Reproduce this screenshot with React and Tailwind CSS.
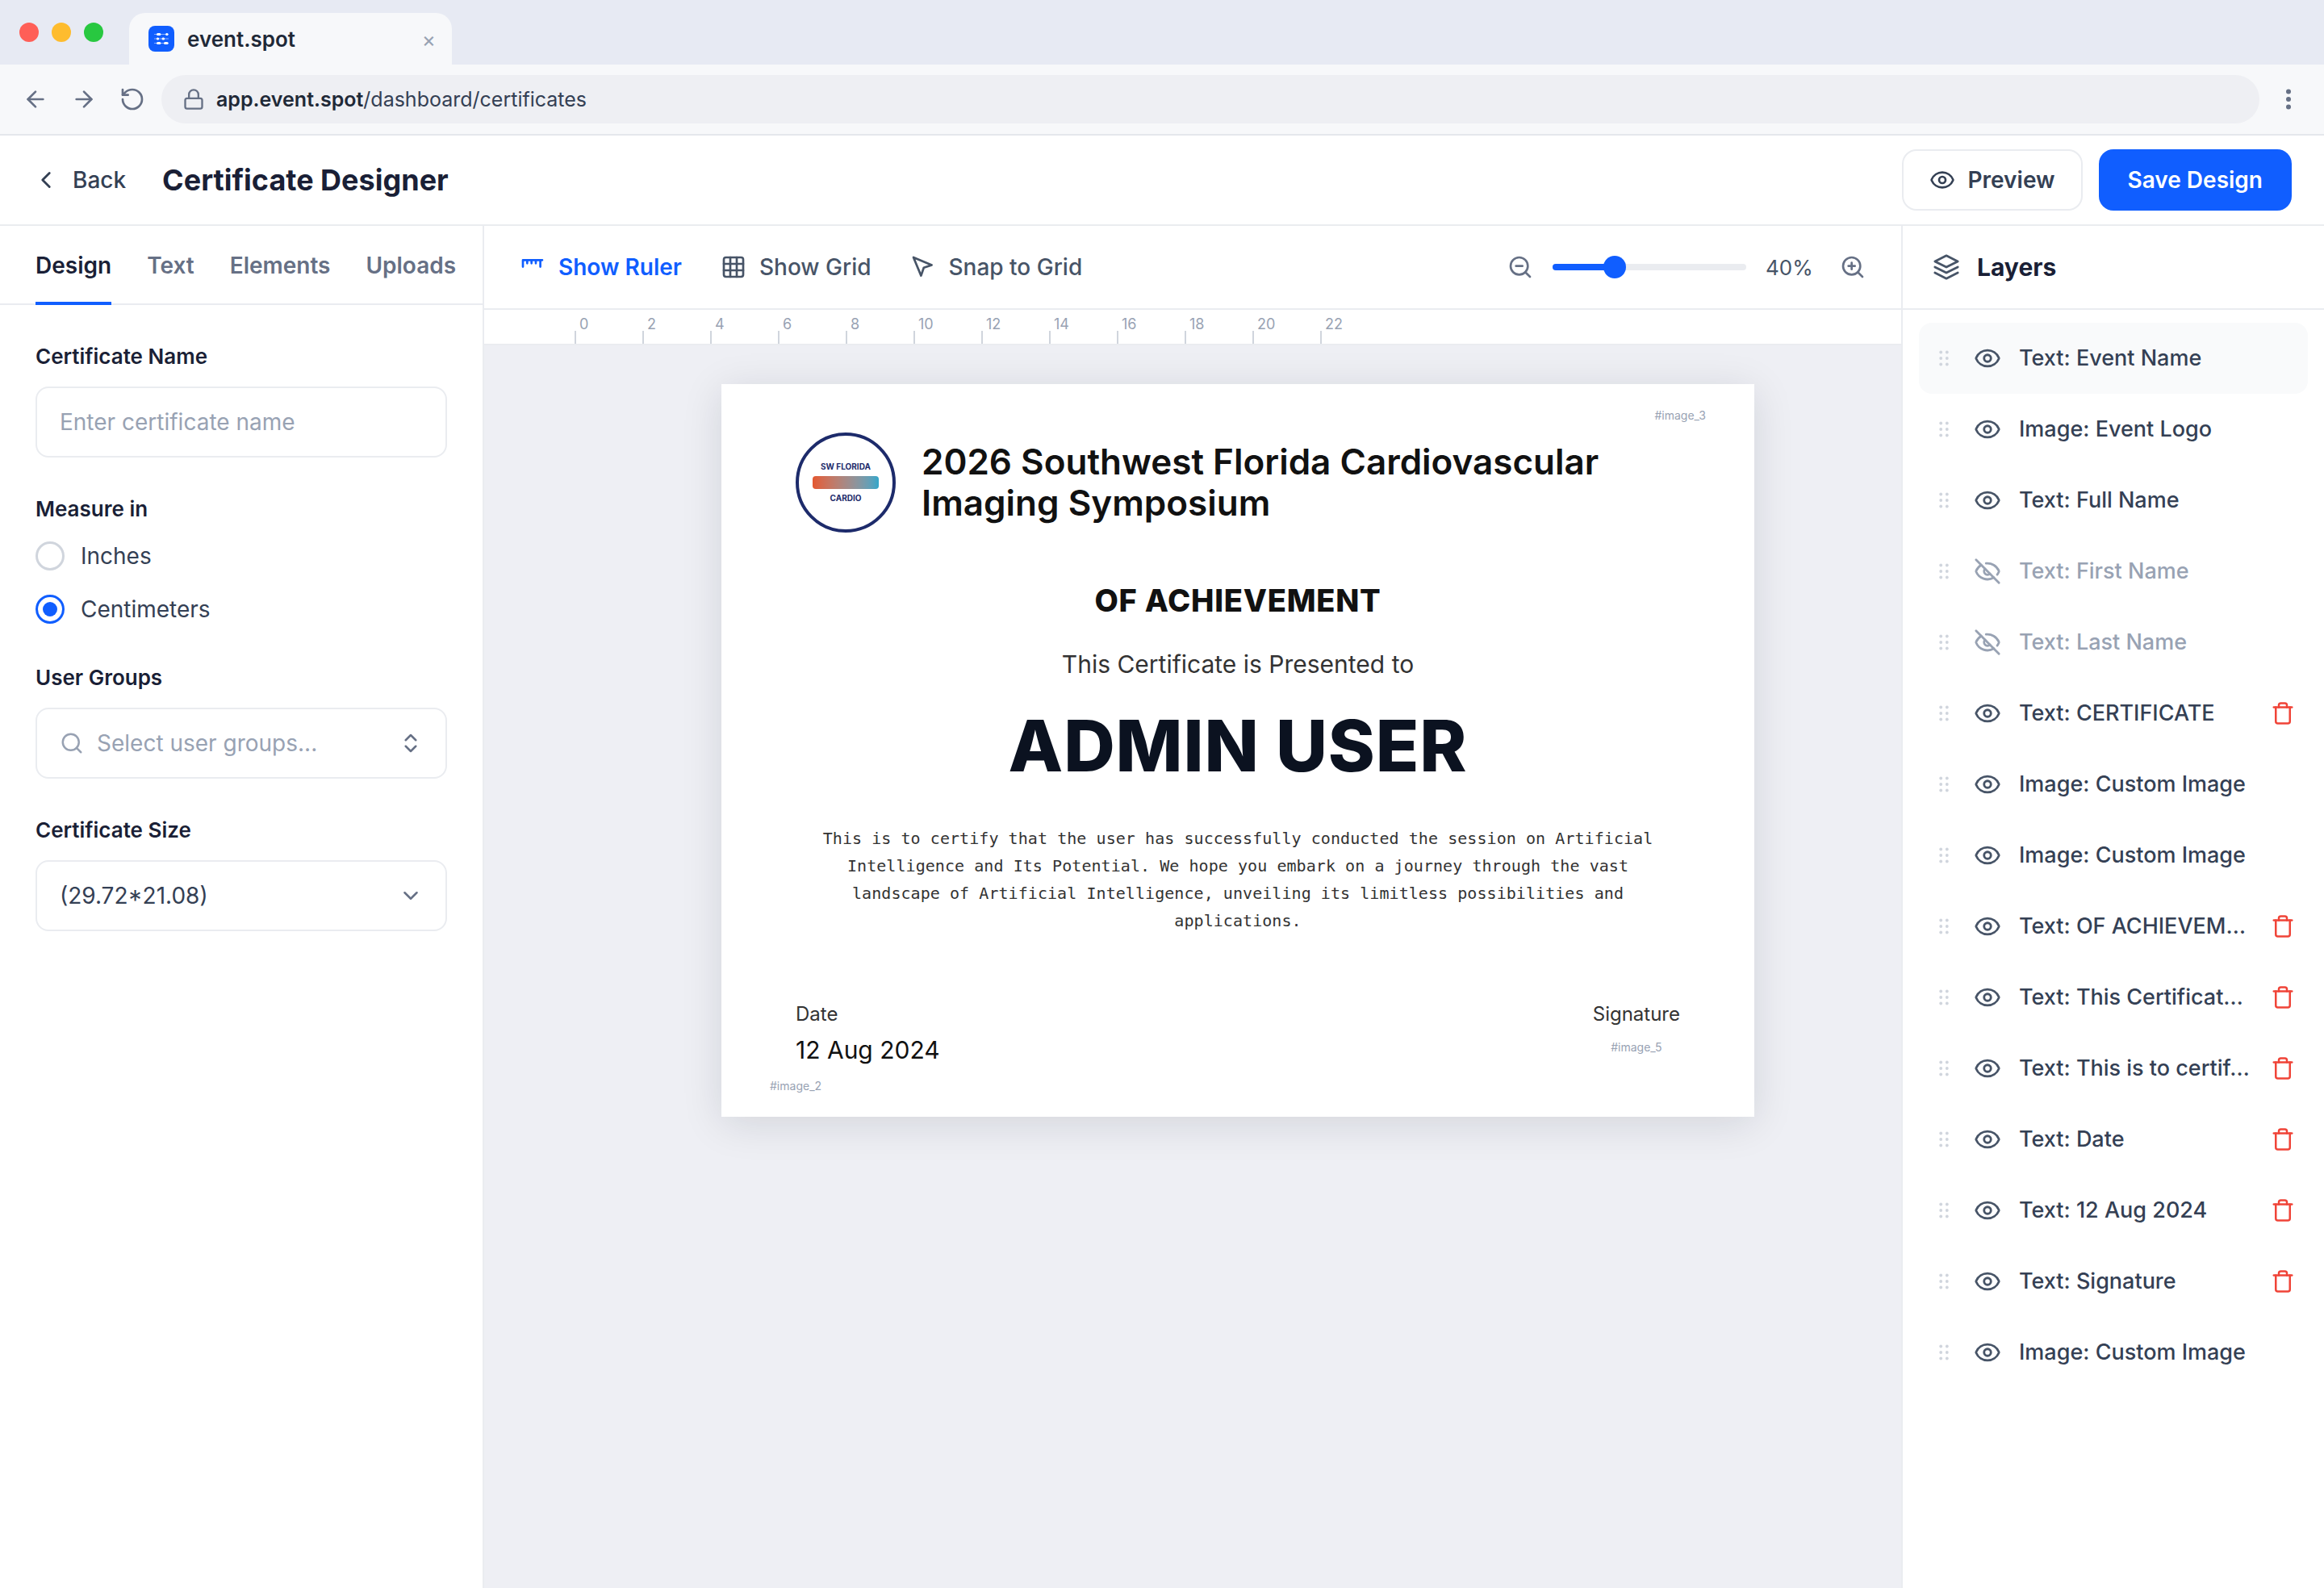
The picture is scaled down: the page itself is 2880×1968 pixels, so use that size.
import {
  ArrowLeft,
  ArrowRight,
  ChevronDown,
  ChevronLeft,
  ChevronsUpDown,
  Eye,
  EyeOff,
  Grid3x3,
  Lock,
  RotateCcw,
  Search,
  Trash,
  ZoomIn,
  ZoomOut,
} from 'lucide-react'

const TABS = ['Design', 'Text', 'Elements', 'Uploads']

const RULER_MARKS = [0, 2, 4, 6, 8, 10, 12, 14, 16, 18, 20, 22]

const LAYERS = [
  { id: 1, label: 'Text: Event Name', active: true },
  { id: 2, label: 'Image: Event Logo' },
  { id: 3, label: 'Text: Full Name' },
  { id: 4, label: 'Text: First Name', hidden: true },
  { id: 5, label: 'Text: Last Name', hidden: true },
  { id: 6, label: 'Text: CERTIFICATE', removable: true },
  { id: 7, label: 'Image: Custom Image' },
  { id: 8, label: 'Image: Custom Image' },
  { id: 9, label: 'Text: OF ACHIEVEM…', removable: true },
  { id: 10, label: 'Text: This Certificat…', removable: true },
  { id: 11, label: 'Text: This is to certif…', removable: true },
  { id: 12, label: 'Text: Date', removable: true },
  { id: 13, label: 'Text: 12 Aug 2024', removable: true },
  { id: 14, label: 'Text: Signature', removable: true },
  { id: 15, label: 'Image: Custom Image' },
]

function StrokeIcon({ size, children, className }) {
  return (
    <svg
      width={size}
      height={size}
      viewBox="0 0 24 24"
      fill="none"
      stroke="currentColor"
      strokeWidth="2"
      strokeLinecap="round"
      strokeLinejoin="round"
      className={className}
    >
      {children}
    </svg>
  )
}

function RulerIcon() {
  return (
    <StrokeIcon size={32}>
      <path d="M3 5.5h18M3 5.5v6.2M7 5.5v3M11 5.5v3M15 5.5v3M19.2 5.5v6.2" />
    </StrokeIcon>
  )
}

function CursorIcon() {
  return (
    <StrokeIcon size={32}>
      <path d="m3 3 7.07 16.97 2.51-7.39 7.39-2.51L3 3z" />
    </StrokeIcon>
  )
}

function LayersIcon() {
  return (
    <StrokeIcon size={34} className="text-[#475467]">
      <path d="M12 2 2 7l10 5 10-5-10-5zM2 17l10 5 10-5M2 12l10 5 10-5" />
    </StrokeIcon>
  )
}

function GripDots() {
  return (
    <svg width="28" height="20" viewBox="0 0 28 20" fill="#d0d5dd" className="shrink-0">
      {[2.5, 10, 17.5].map(y => (
        <g key={y}>
          <circle cx="9.2" cy={y} r="1.9" />
          <circle cx="16.8" cy={y} r="1.9" />
        </g>
      ))}
    </svg>
  )
}

function Favicon() {
  return (
    <svg width="32" height="32" viewBox="0 0 32 32" fill="none">
      <rect width="32" height="32" rx="8" fill="#105eff" />
      <path
        d="M7.5 10.5h17M7.5 16h17M7.5 21.5h17"
        stroke="#fff"
        strokeOpacity="0.5"
        strokeWidth="1"
        strokeLinecap="round"
      />
      <path
        d="M11.5 10.5h2.4M22.6 10.5h.4M11.4 16h.2M18 16h.6M11.5 21.5h2.4M20.5 21.5h2.6"
        stroke="#fff"
        strokeWidth="3"
        strokeLinecap="round"
      />
    </svg>
  )
}

function BrowserChrome() {
  return (
    <div>
      <div className="flex h-20 bg-[#e7eaf3]">
        <div className="flex items-center gap-4 pl-6">
          <span className="size-6 rounded-full bg-[#ff5f57]" />
          <span className="size-6 rounded-full bg-[#febc2e]" />
          <span className="size-6 rounded-full bg-[#28c840]" />
        </div>
        <div className="mt-4 ml-8 flex h-16 w-[400px] items-center rounded-t-[20px] bg-[#f7f8fa] px-6">
          <Favicon />
          <span className="ml-4 text-[26px] font-semibold text-[#1f2937]">event.spot</span>
          <span className="ml-auto mr-[-4px] text-[26px] text-[#98a2b3]">×</span>
        </div>
      </div>
      <div className="flex h-22 items-center border-b-2 border-[#e4e7ec] bg-[#f7f8fa] text-[#667085]">
        <div className="ml-7 flex items-center gap-7">
          <ArrowLeft size={32} />
          <ArrowRight size={32} />
          <RotateCcw size={32} />
        </div>
        <div className="ml-5 flex h-[60px] flex-1 items-center rounded-full bg-[#eeeff3] pl-[26px]">
          <Lock size={28} />
          <span className="ml-[14px] text-[25px] leading-9 text-[#344054]">
            <span className="font-semibold text-[#1f2937]">app.event.spot</span>/dashboard/certificates
          </span>
        </div>
        <svg width="80" height="28" viewBox="0 0 80 28" fill="#667085">
          <circle cx="36" cy="4.5" r="3" />
          <circle cx="36" cy="14" r="3" />
          <circle cx="36" cy="23.5" r="3" />
        </svg>
      </div>
    </div>
  )
}

function Header() {
  return (
    <div className="flex h-28 items-center border-b-2 border-[#eaecf0] pr-10 pl-10">
      <ChevronLeft size={34} className="text-[#344054]" />
      <span className="ml-4 text-[28px] font-medium text-[#344054]">Back</span>
      <h1 className="ml-[45px] text-[36px] font-bold text-[#1a1f36]">Certificate Designer</h1>
      <div className="ml-auto flex gap-5">
        <button className="flex h-[76px] items-center gap-4 rounded-[18px] border-2 border-[#eaecf0] px-8 text-[28px] font-semibold text-[#344054]">
          <Eye size={32} />
          Preview
        </button>
        <button className="h-[76px] rounded-[18px] bg-[#105eff] px-9 text-[28px] font-semibold text-white">
          Save Design
        </button>
      </div>
    </div>
  )
}

function FieldLabel({ children }) {
  return (
    <div className="mb-[18px] text-[26px] leading-[39px] font-semibold text-[#1a1f36]">{children}</div>
  )
}

function DesignPanel() {
  return (
    <aside className="w-[600px] shrink-0 border-r-2 border-[#eaecf0]">
      <div className="flex h-[98px] gap-11 border-b-2 border-[#eaecf0] px-11 text-[28px] font-semibold">
        {TABS.map((tab, i) => (
          <div
            key={tab}
            className={
              i === 0
                ? 'flex h-[98px] items-center border-b-4 border-[#105eff] pt-1 text-[#1a1f36]'
                : 'flex h-[98px] items-center text-[#667085]'
            }
          >
            {tab}
          </div>
        ))}
      </div>

      <div className="flex flex-col gap-11 p-11 text-[28px]">
        <div>
          <FieldLabel>Certificate Name</FieldLabel>
          <div className="flex h-22 items-center rounded-2xl border-2 border-[#eaecf0] px-7 text-[#98a2b3]">
            Enter certificate name
          </div>
        </div>

        <div>
          <FieldLabel>Measure in</FieldLabel>
          <div className="flex flex-col gap-6 leading-[42px] text-[#344054]">
            <div className="flex items-center gap-5">
              <span className="size-9 rounded-full border-3 border-[#d0d5dd]" />
              Inches
            </div>
            <div className="flex items-center gap-5">
              <span className="flex size-9 items-center justify-center rounded-full border-3 border-[#105eff]">
                <span className="size-[18px] rounded-full bg-[#105eff]" />
              </span>
              Centimeters
            </div>
          </div>
        </div>

        <div>
          <FieldLabel>User Groups</FieldLabel>
          <div className="flex h-22 items-center rounded-2xl border-2 border-[#eaecf0] px-7 text-[#98a2b3]">
            <Search size={30} />
            <span className="ml-4">Select user groups...</span>
            <ChevronsUpDown size={30} className="ml-auto text-[#667085]" />
          </div>
        </div>

        <div>
          <FieldLabel>Certificate Size</FieldLabel>
          <div className="flex h-22 items-center justify-between rounded-2xl border-2 border-[#eaecf0] px-7 text-[#344054]">
            (29.72*21.08)
            <ChevronDown size={30} className="text-[#667085]" />
          </div>
        </div>
      </div>
    </aside>
  )
}

function Toolbar() {
  return (
    <div className="flex h-[104px] items-center gap-12 border-b-2 border-[#eaecf0] bg-white px-11 text-[28px] font-medium text-[#475467]">
      <div className="flex items-center gap-4 font-semibold text-[#105eff]">
        <RulerIcon />
        Show Ruler
      </div>
      <div className="flex items-center gap-4">
        <Grid3x3 size={32} />
        Show Grid
      </div>
      <div className="flex items-center gap-4">
        <CursorIcon />
        Snap to Grid
      </div>
      <div className="ml-auto flex items-center gap-6">
        <ZoomOut size={32} className="text-[#667085]" />
        <div className="flex h-2 w-60 items-center rounded-full bg-[#eaecf0]">
          <div className="h-2 w-[77px] rounded-full bg-[#105eff]" />
          <div className="-ml-[14px] size-7 rounded-full bg-[#105eff]" />
        </div>
        <span className="w-[68px] text-[26px] font-normal">40%</span>
        <ZoomIn size={32} className="text-[#667085]" />
      </div>
    </div>
  )
}

function Ruler() {
  return (
    <div className="flex h-11 border-b-2 border-[#eaecf0] bg-white pl-28">
      {RULER_MARKS.map(mark => (
        <div key={mark} className="flex w-[84px] items-end">
          <div className="h-4 w-[2px] bg-[#d0d5dd]" />
          <span className="ml-1 self-start pt-[7px] text-[18px] leading-[22px] text-[#98a2b3]">
            {mark}
          </span>
        </div>
      ))}
    </div>
  )
}

function Certificate() {
  return (
    <div className="relative ml-[294px] h-[908px] w-[1280px] bg-white px-[92px] pt-[60px] text-center shadow-[0_8px_48px_rgba(16,24,40,0.12)]">
      <div className="flex items-center gap-8 text-left">
        <div className="flex size-[124px] shrink-0 flex-col items-center justify-center gap-1 rounded-full border-4 border-[#1d2b6b] text-[10px] leading-[15px] font-bold text-[#1d2b6b]">
          SW FLORIDA
          <span className="h-4 w-[82px] rounded bg-linear-to-r from-[#e4572e] to-[#2ea6c9]" />
          CARDIO
        </div>
        <div className="w-[900px] text-[44px] leading-[50.6px] font-semibold text-[#111111]">
          2026 Southwest Florida Cardiovascular Imaging Symposium
        </div>
      </div>

      <div className="mt-[61px] text-[38px] leading-[46px] font-extrabold tracking-[0.02em] text-[#111111]">
        OF ACHIEVEMENT
      </div>
      <div className="mt-[38px] text-[30px] leading-9 text-[#333333]">This Certificate is Presented to</div>
      <div className="mt-[39px] text-[88px] leading-[88px] font-extrabold tracking-[0.01em] text-[#0b1220]">
        ADMIN USER
      </div>
      <p className="mx-auto mt-[54px] w-[1040px] font-['DejaVu_Sans_Mono',monospace] text-[20px] leading-[34px] tracking-[0.06px] text-[#333333]">
        This is to certify that the user has successfully conducted the session on Artificial Intelligence
        and Its Potential. We hope you embark on a journey through the vast landscape of Artificial
        Intelligence, unveiling its limitless possibilities and applications.
      </p>

      <div className="mt-[84px] flex justify-between text-[24px] leading-[30px] text-[#333333]">
        <div className="text-left">
          Date
          <div className="mt-[11px] text-[30px] leading-9 text-[#111111]">12 Aug 2024</div>
        </div>
        <div>
          Signature
          <div className="mt-[17px] text-[14px] leading-[18px] text-[#98a2b3]">#image_5</div>
        </div>
      </div>

      {/* placeholders dropped freely on the sheet */}
      <span className="absolute top-[30px] right-[60px] text-[14px] leading-[18px] text-[#98a2b3]">
        #image_3
      </span>
      <span className="absolute top-[861px] left-[60px] text-[14px] leading-[18px] text-[#98a2b3]">
        #image_2
      </span>
    </div>
  )
}

function LayerRow({ layer }) {
  return (
    <div
      className={
        layer.active
          ? 'flex h-22 items-center gap-[22px] rounded-2xl bg-[#f9fafb] pr-4 pl-[18px]'
          : 'flex h-22 items-center gap-[22px] pr-4 pl-[18px]'
      }
    >
      <GripDots />
      {layer.hidden ? (
        <EyeOff size={34} className="shrink-0 text-[#98a2b3]" />
      ) : (
        <Eye size={34} className="shrink-0 text-[#475467]" />
      )}
      <span
        className={
          layer.hidden
            ? 'flex-1 text-[27px] font-medium whitespace-nowrap text-[#98a2b3]'
            : 'flex-1 text-[27px] font-medium whitespace-nowrap text-[#344054]'
        }
      >
        {layer.label}
      </span>
      {layer.removable && <Trash size={30} className="shrink-0 text-[#f04438]" />}
    </div>
  )
}

function LayersPanel() {
  return (
    <aside className="w-[524px] shrink-0 border-l-2 border-[#eaecf0]">
      <div className="flex h-[104px] items-center gap-[21px] border-b-2 border-[#eaecf0] pl-[37px] text-[30px] font-bold text-[#1a1f36]">
        <LayersIcon />
        Layers
      </div>
      <div className="px-5 pt-4">
        {LAYERS.map(layer => (
          <LayerRow key={layer.id} layer={layer} />
        ))}
      </div>
    </aside>
  )
}

export default function App() {
  return (
    <div className="flex h-[1968px] w-[2880px] flex-col overflow-hidden bg-white font-['Inter',sans-serif]">
      <BrowserChrome />
      <Header />
      <div className="flex min-h-0 flex-1">
        <DesignPanel />
        <main className="flex min-w-0 flex-1 flex-col bg-[#eeeff4]">
          <Toolbar />
          <Ruler />
          <div className="flex-1 overflow-hidden pt-12">
            <Certificate />
          </div>
        </main>
        <LayersPanel />
      </div>
    </div>
  )
}
